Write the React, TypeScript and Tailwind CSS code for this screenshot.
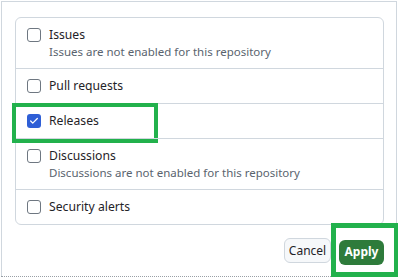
import { Check } from 'lucide-react';

type Item = { label: string; note?: string; checked?: boolean; marked?: boolean };

const items: Item[] = [
  { label: 'Issues', note: 'Issues are not enabled for this repository' },
  { label: 'Pull requests' },
  { label: 'Releases', checked: true, marked: true },
  { label: 'Discussions', note: 'Discussions are not enabled for this repository' },
  { label: 'Security alerts' },
];

const Box = ({ checked }: { checked?: boolean }) =>
  checked ? (
    <span className="mt-[2px] flex h-[14px] w-[14px] shrink-0 items-center justify-center rounded-[3px] bg-[#2f5fd6]">
      <Check className="h-[10px] w-[10px] text-white" strokeWidth={3} />
    </span>
  ) : (
    <span className="mt-[2px] h-[14px] w-[14px] shrink-0 rounded-[3px] border border-[#6e7781] bg-white" />
  );

export default function App() {
  return (
    <div className="relative h-[278px] w-[398px] overflow-hidden bg-white pl-[1px] pt-[1px] font-['Noto_Sans',sans-serif] text-[#1f2328]">
      <div className="h-[275px] w-[396px] border border-b-0 border-[#d0d7de] pl-[13px] pr-[12px] pt-[15px]">
        {/* list of items */}
        <div className="rounded-md border border-[#d0d7de]">
          {items.map((it, i) => (
            <div
              key={it.label}
              className={`relative flex gap-2 pb-[8px] pl-[11px] pt-[8px] ${i > 0 ? 'border-t border-[#d0d7de]' : ''}`}
            >
              <Box checked={it.checked} />
              <div>
                <div className="text-[12.2px] leading-[18px]">{it.label}</div>
                {it.note && <div className="text-[11.5px] leading-[16px] text-[#59636e]">{it.note}</div>}
              </div>
              {it.marked && (
                <div className="absolute left-[-4px] top-[-1px] h-[40px] w-[146px] border-[4px] border-[#22b14c]" />
              )}
            </div>
          ))}
        </div>

        {/* footer */}
        <div className="mt-[13px] flex justify-end gap-2">
          <button className="h-[25px] w-[47px] rounded-md border border-[#d0d7de] bg-[#f6f8fa] text-[12px] text-[#1f2328]">
            Cancel
          </button>
          <div className="relative">
            <button className="h-[25px] w-[45px] rounded-md bg-[#2e7b3b] text-[12px] font-bold text-white">
              Apply
            </button>
            <div className="absolute left-[-8px] top-[-15px] h-[54px] w-[68px] border-[5px] border-[#22b14c]" />
          </div>
        </div>
      </div>
      <div className="h-[2px] w-[398px] border-t border-dotted border-[#9aa0a6]" />
    </div>
  );
}
